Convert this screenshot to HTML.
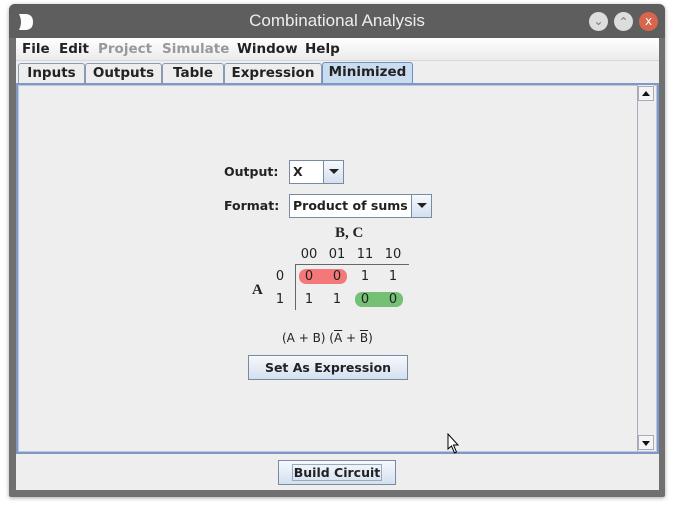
<!DOCTYPE html>
<html><head><style>
*{margin:0;padding:0;box-sizing:border-box}
body{width:674px;height:506px;background:#fff;position:relative;overflow:hidden;font-family:"DejaVu Sans","Liberation Sans",sans-serif;font-size:13px;color:#222}
.a{position:absolute}
.win{left:9px;top:4px;width:656px;height:493px;background:#707070;border-radius:6px 6px 2px 2px;box-shadow:0 1px 4px rgba(0,0,0,.35)}
.title{left:9px;top:4px;width:656px;height:34px;background:#5e5e5e;border-radius:6px 6px 0 0;color:#eee;font-size:17px;font-family:"Liberation Sans",sans-serif;text-align:center;line-height:34px}
.content{left:16px;top:38px;width:643px;height:452px;background:#eeeeee}
.menu{left:16px;top:38px;width:643px;height:23px;background:linear-gradient(#fff,#ebebeb);border-bottom:1px solid #d8d8d8}
.menu span{position:absolute;top:3px;font-size:13.5px;font-weight:bold;color:#222}
.tab{position:absolute;top:63px;height:20px;border:1px solid #8a9ab0;border-bottom:none;background:#eee;font-size:13.5px;font-weight:bold;text-align:center;line-height:19px;border-radius:3px 3px 0 0}
.btn{position:absolute;border:1px solid #7a8aa3;background:linear-gradient(#f6f9fd,#d4e0ef);font-weight:bold;text-align:center;font-size:12.5px}
.cb{position:absolute;border:1px solid #7a8aa3;background:#fff;font-weight:bold;font-size:12.5px;padding-left:3px;white-space:nowrap}
.cb i{position:absolute;right:0;top:0;width:20px;height:100%;border-left:1px solid #7a8aa3;background:linear-gradient(#f6f9fd,#d4e0ef)}
.cb i:after{content:"";position:absolute;left:5px;top:8px;border:5px solid transparent;border-top:5px solid #222;border-bottom:none}
.k{position:absolute;font-size:13px;width:20px;text-align:center}
.lb{position:absolute;font-weight:bold;font-size:12.5px}
</style></head><body>
<div class="a win"></div>
<div class="a title">Combinational Analysis</div>
<svg class="a" style="left:16px;top:12px" width="20" height="20"><path d="M3 2 H9 Q17 2 17 10 Q17 18 9 18 H3 Q7 10 3 2Z" fill="#fff"/></svg>
<div class="a" style="left:589px;top:12px;width:19px;height:19px;border-radius:50%;background:#ddd;color:#777;font-size:12px;text-align:center;line-height:19px">⌄</div>
<div class="a" style="left:614px;top:12px;width:19px;height:19px;border-radius:50%;background:#ddd;color:#777;font-size:12px;text-align:center;line-height:21px">⌃</div>
<div class="a" style="left:639px;top:12px;width:19px;height:19px;border-radius:50%;background:#d8664c;color:#fff;font-size:12px;text-align:center;line-height:19px">x</div>
<div class="a content"></div>
<div class="a menu">
<span style="left:6px">File</span><span style="left:43px">Edit</span><span style="left:82px;color:#999">Project</span><span style="left:146px;color:#999">Simulate</span><span style="left:221px">Window</span><span style="left:289px">Help</span></div>
<div class="tab" style="left:18px;width:67px">Inputs</div>
<div class="tab" style="left:85px;width:77px">Outputs</div>
<div class="tab" style="left:162px;width:62px">Table</div>
<div class="tab" style="left:224px;width:98px">Expression</div>
<div class="tab" style="left:322px;width:91px;background:#c9dcf0;border-color:#7090c0;height:22px;top:62px">Minimized</div>
<div class="a" style="left:16px;top:83px;width:643px;height:371px;border:2px solid #7f98c4;background:#eee"></div>
<div class="a" style="left:18px;top:85px;width:639px;height:367px;border:1px solid #b9c8e0"></div>
<div class="a" style="left:637px;top:85px;width:17px;height:366px;border-left:1px solid #aab;background:#eee"></div>
<div class="a" style="left:638px;top:86px;width:16px;height:15px;border:1px solid #aab;background:#f4f4f4"></div>
<div class="a" style="left:642px;top:91px;border:4px solid transparent;border-bottom:5px solid #111;border-top:none"></div>
<div class="a" style="left:638px;top:435px;width:16px;height:15px;border:1px solid #aab;background:#f4f4f4"></div>
<div class="a" style="left:642px;top:441px;border:4px solid transparent;border-top:5px solid #111;border-bottom:none"></div>

<div class="lb" style="left:224px;top:164px">Output:</div>
<div class="cb" style="left:289px;top:160px;width:55px;height:24px;line-height:22px">X<i></i></div>
<div class="lb" style="left:224px;top:198px">Format:</div>
<div class="cb" style="left:289px;top:194px;width:143px;height:24px;line-height:22px">Product of sums<i></i></div>
<div class="a" style="left:335px;top:225px;font-family:'Liberation Serif',serif;font-weight:bold;font-size:15px">B, C</div>
<div class="k" style="left:299px;top:247px">00</div><div class="k" style="left:327px;top:247px">01</div><div class="k" style="left:355px;top:247px">11</div><div class="k" style="left:383px;top:247px">10</div>
<div class="a" style="left:295px;top:264px;width:114px;height:1px;background:#666"></div>
<div class="a" style="left:295px;top:264px;width:1px;height:46px;background:#666"></div>
<div class="a" style="left:299px;top:269px;width:48px;height:15px;border-radius:7px;background:#f57878"></div>
<div class="a" style="left:355px;top:292px;width:48px;height:15px;border-radius:7px;background:#74c074"></div>
<div class="a" style="left:252px;top:282px;font-family:'Liberation Serif',serif;font-weight:bold;font-size:15px">A</div>
<div class="k" style="left:270px;top:269px">0</div><div class="k" style="left:270px;top:292px">1</div>
<div class="k" style="left:299px;top:269px">0</div><div class="k" style="left:327px;top:269px">0</div><div class="k" style="left:355px;top:269px">1</div><div class="k" style="left:383px;top:269px">1</div>
<div class="k" style="left:299px;top:292px">1</div><div class="k" style="left:327px;top:292px">1</div><div class="k" style="left:355px;top:292px">0</div><div class="k" style="left:383px;top:292px">0</div>
<div class="a" style="left:282px;top:331px;font-size:12px">(A + B) (<span style="text-decoration:overline">A</span> + <span style="text-decoration:overline">B</span>)</div>
<div class="btn" style="left:248px;top:355px;width:160px;height:25px;line-height:23px">Set As Expression</div>
<div class="btn" style="left:278px;top:460px;width:118px;height:25px;line-height:23px"><span style="border:1px solid #9ab;padding:0 1px">Build Circuit</span></div>
<svg class="a" style="left:447px;top:433px" width="14" height="22"><path d="M1 1 L1 16 L4.5 13 L7.5 20 L9.5 19 L6.5 12 L11 12 Z" fill="#fff" stroke="#000" stroke-width="1"/></svg>
</body></html>
